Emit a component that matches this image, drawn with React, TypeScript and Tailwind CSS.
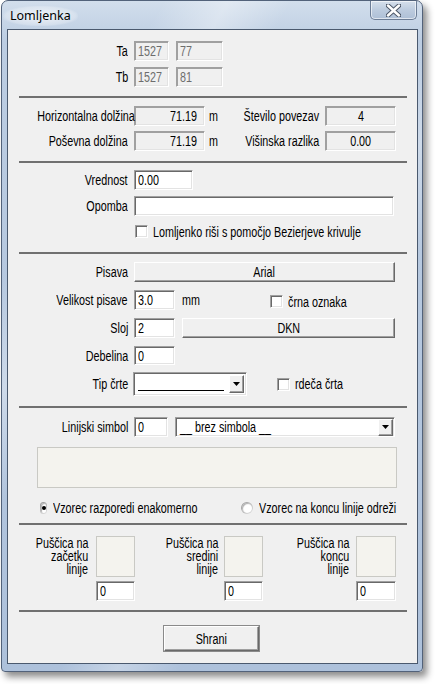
import React from "react";

const sunkenW =
  "bg-white border border-t-[#a0a0a0] border-l-[#a0a0a0] border-b-white border-r-white shadow-[inset_1px_1px_0_#696969,inset_-1px_-1px_0_#e3e3e3]";
const sunkenD =
  "bg-[#f0f0f0] border border-t-[#a0a0a0] border-l-[#a0a0a0] border-b-white border-r-white shadow-[inset_1px_1px_0_#a0a0a0,inset_-1px_-1px_0_#e3e3e3]";
const raised =
  "bg-[#f0f0f0] border border-t-white border-l-white border-b-[#696969] border-r-[#696969] shadow-[inset_-1px_-1px_0_#a0a0a0]";

function T({ children, o = "l" }: { children: React.ReactNode; o?: "l" | "r" | "c" }) {
  const cls = o === "r" ? "origin-right" : o === "c" ? "origin-center" : "origin-left";
  return <span className={`inline-block whitespace-nowrap scale-x-[0.77] ${cls}`}>{children}</span>;
}

function Sep() {
  return <div className="ml-[11px] w-[388px] h-[2px] bg-[#707070]" />;
}

function Label({ children }: { children: React.ReactNode }) {
  return (
    <div className="w-[120px] shrink-0 text-right leading-none">
      <T o="r">{children}</T>
    </div>
  );
}

function Box({
  w,
  h = "h-[20px]",
  disabled,
  align = "left",
  children,
}: {
  w: string;
  h?: string;
  disabled?: boolean;
  align?: "left" | "right" | "center";
  children?: React.ReactNode;
}) {
  const a =
    align === "right"
      ? "justify-end pr-[7px]"
      : align === "center"
      ? "justify-center"
      : "justify-start pl-[3px]";
  const o = align === "right" ? "r" : align === "center" ? "c" : "l";
  return (
    <div
      className={`${w} ${h} shrink-0 flex items-center ${a} leading-none ${
        disabled ? sunkenD : sunkenW
      }`}
    >
      {children !== undefined && <T o={o}>{children}</T>}
    </div>
  );
}

function Check({ label }: { label: string }) {
  return (
    <div className="flex items-center gap-[5px] leading-none">
      <div className={`w-[13px] h-[13px] ${sunkenW}`} />
      <T>{label}</T>
    </div>
  );
}

function Radio({ checked, label }: { checked?: boolean; label: string }) {
  return (
    <div className="flex items-center gap-[6px] leading-none">
      <div className="w-[12px] h-[12px] rounded-full bg-[linear-gradient(135deg,#8f8f8f,#e8e8e8)] p-[1px]">
        <div className="w-full h-full rounded-full bg-white flex items-center justify-center shadow-[inset_1px_1px_1px_#b0b0b0]">
          {checked && <div className="w-[4px] h-[4px] rounded-full bg-black" />}
        </div>
      </div>
      <T>{label}</T>
    </div>
  );
}

function DropBtn({ h = "h-[17px]" }: { h?: string }) {
  return (
    <div className={`w-[15px] ${h} flex items-center justify-center ${raised}`}>
      <svg width="7" height="4" viewBox="0 0 7 4">
        <path d="M0 0 H7 L3.5 4 Z" fill="#000" />
      </svg>
    </div>
  );
}

function ArrowCol({
  lines,
  lw,
  gap,
  bw,
}: {
  lines: string[];
  lw: string;
  gap: string;
  bw: string;
}) {
  return (
    <>
      <div className={`${lw} pt-[1px] text-right leading-[13px]`}>
        {lines.map((l) => (
          <div key={l}>
            <T o="r">{l}</T>
          </div>
        ))}
      </div>
      <div className={`${gap} ${bw} flex flex-col gap-[4px]`}>
        <div className="h-[41px] bg-[#f4f3ee] border border-[#c9c9c4]" />
        <Box w={bw}>0</Box>
      </div>
    </>
  );
}

export default function App() {
  return (
    <div className="w-[436px] h-[684px] bg-white font-['Liberation_Sans','Arial',sans-serif] text-[14px] text-black">
      <div className="relative ml-[1px] w-[422px] h-[672px] rounded-t-[7px] rounded-b-[4px] border border-[#52627a] bg-[linear-gradient(to_bottom,#d2deec,#bccde2_40px,#adc1db)] shadow-[4px_5px_7px_rgba(0,0,0,0.45)] flex flex-col overflow-hidden">
        <div className="pointer-events-none absolute inset-0 bg-[linear-gradient(120deg,transparent_20%,rgba(255,255,255,0.35)_28%,transparent_36%,transparent_55%,rgba(255,255,255,0.3)_62%,transparent_70%)]" />
        {/* title bar */}
        <div className="relative h-[28px] flex items-start justify-between">
          <div className="ml-[1px] mt-[5px] px-[7px] h-[20px] flex items-center rounded-full bg-[radial-gradient(ellipse_at_center,rgba(255,255,255,0.7),rgba(255,255,255,0.25)_65%,transparent_75%)]">
            <span className="font-['Noto_Sans',sans-serif] text-[12.5px] text-black leading-none">Lomljenka</span>
          </div>
          <div className="mr-[5px] w-[47px] h-[19px] rounded-b-[5px] border border-t-0 border-[#6c7d96] bg-[linear-gradient(to_bottom,#d6e0ec,#bccbde_50%,#aebfd6)] shadow-[inset_0_0_0_1px_rgba(255,255,255,0.6)] flex items-center justify-center">
            <svg width="15" height="13" viewBox="0 0 15 13">
              <path
                d="M2 1.5 L13 11.5 M13 1.5 L2 11.5"
                stroke="#4b5566"
                strokeWidth="4.5"
                strokeLinecap="round"
              />
              <path
                d="M2 1.5 L13 11.5 M13 1.5 L2 11.5"
                stroke="#ffffff"
                strokeWidth="2.5"
                strokeLinecap="round"
              />
            </svg>
          </div>
        </div>
        {/* client */}
        <div className="relative ml-[5px] w-[411px] h-[635px] border border-[#4a596e] bg-[#f0f0f0] flex flex-col">
          {/* Ta / Tb */}
          <div className="mt-[11px] flex items-center">
            <Label>Ta</Label>
            <div className="ml-[6px] flex gap-[7px] text-[#6d6d6d]">
              <Box w="w-[35px]" disabled>1527</Box>
              <Box w="w-[47px]" disabled>77</Box>
            </div>
          </div>
          <div className="mt-[6px] flex items-center">
            <Label>Tb</Label>
            <div className="ml-[6px] flex gap-[7px] text-[#6d6d6d]">
              <Box w="w-[35px]" disabled>1527</Box>
              <Box w="w-[47px]" disabled>81</Box>
            </div>
          </div>
          <div className="mt-[9px]">
            <Sep />
          </div>
          {/* lengths */}
          <div className="mt-[8px] flex items-center">
            <Label>Horizontalna dolžina</Label>
            <div className="ml-[6px]">
              <Box w="w-[71px]" disabled align="right">71.19</Box>
            </div>
            <div className="w-[114px] flex items-center justify-between leading-none">
              <span className="ml-[4px]">
                <T>m</T>
              </span>
              <T o="r">Število povezav</T>
            </div>
            <div className="ml-[6px]">
              <Box w="w-[71px]" disabled align="center">4</Box>
            </div>
          </div>
          <div className="mt-[5px] flex items-center">
            <Label>Poševna dolžina</Label>
            <div className="ml-[6px]">
              <Box w="w-[71px]" disabled align="right">71.19</Box>
            </div>
            <div className="w-[114px] flex items-center justify-between leading-none">
              <span className="ml-[4px]">
                <T>m</T>
              </span>
              <T o="r">Višinska razlika</T>
            </div>
            <div className="ml-[6px]">
              <Box w="w-[71px]" disabled align="center">0.00</Box>
            </div>
          </div>
          <div className="mt-[10px]">
            <Sep />
          </div>
          {/* vrednost */}
          <div className="mt-[7px] flex items-center">
            <Label>Vrednost</Label>
            <div className="ml-[6px]">
              <Box w="w-[59px]">0.00</Box>
            </div>
          </div>
          <div className="mt-[6px] flex items-center">
            <Label>Opomba</Label>
            <div className="ml-[6px]">
              <Box w="w-[260px]" />
            </div>
          </div>
          <div className="mt-[9px] ml-[127px] h-[13px] flex items-center">
            <Check label="Lomljenko riši s pomočjo Bezierjeve krivulje" />
          </div>
          <div className="mt-[14px]">
            <Sep />
          </div>
          {/* pisava */}
          <div className="mt-[8px] flex items-center">
            <Label>Pisava</Label>
            <div className={`ml-[6px] w-[261px] h-[20px] flex items-center justify-center leading-none ${raised}`}>
              <T o="c">Arial</T>
            </div>
          </div>
          <div className="mt-[8px] flex items-center">
            <Label>Velikost pisave</Label>
            <div className="ml-[6px]">
              <Box w="w-[41px]">3.0</Box>
            </div>
            <span className="ml-[7px] w-[88px] leading-none">
              <T>mm</T>
            </span>
            <div className="mt-[3px]">
              <Check label="črna oznaka" />
            </div>
          </div>
          <div className="mt-[8px] flex items-center">
            <Label>Sloj</Label>
            <div className="ml-[6px]">
              <Box w="w-[41px]">2</Box>
            </div>
            <div className={`ml-[7px] w-[213px] h-[20px] flex items-center justify-center leading-none ${raised}`}>
              <T o="c">DKN</T>
            </div>
          </div>
          <div className="mt-[8px] flex items-center">
            <Label>Debelina</Label>
            <div className="ml-[6px]">
              <Box w="w-[41px]" h="h-[19px]">0</Box>
            </div>
          </div>
          <div className="mt-[7px] flex items-center">
            <Label>Tip črte</Label>
            <div className={`ml-[5px] w-[114px] h-[24px] flex items-center justify-between pl-[4px] pr-[2px] ${sunkenW}`}>
              <div className="mt-[12px] w-[86px] h-[1px] bg-black" />
              <DropBtn h="h-[18px]" />
            </div>
            <div className="ml-[30px]">
              <Check label="rdeča črta" />
            </div>
          </div>
          <div className="mt-[10px]">
            <Sep />
          </div>
          {/* simbol */}
          <div className="mt-[9px] flex items-center">
            <Label>Linijski simbol</Label>
            <div className="ml-[6px]">
              <Box w="w-[34px]">0</Box>
            </div>
            <div className={`ml-[7px] w-[220px] h-[20px] flex items-center justify-between pl-[4px] pr-[1px] leading-none ${sunkenW}`}>
              <T>__ brez simbola __</T>
              <DropBtn />
            </div>
          </div>
          <div className="mt-[10px] ml-[29px] w-[360px] h-[41px] bg-[#f4f3ee] border border-[#c9c9c4]" />
          <div className="mt-[13px] h-[14px] flex items-center">
            <div className="ml-[32px] w-[201px]">
              <Radio checked label="Vzorec razporedi enakomerno" />
            </div>
            <Radio label="Vzorec na koncu linije odreži" />
          </div>
          <div className="mt-[8px]">
            <Sep />
          </div>
          {/* puščice */}
          <div className="mt-[11px] flex">
            <ArrowCol lines={["Puščica na", "začetku", "linije"]} lw="w-[80px]" gap="ml-[8px]" bw="w-[39px]" />
            <ArrowCol lines={["Puščica na", "sredini", "linije"]} lw="w-[83px]" gap="ml-[6px]" bw="w-[39px]" />
            <ArrowCol lines={["Puščica na", "koncu", "linije"]} lw="w-[86px]" gap="ml-[7px]" bw="w-[40px]" />
          </div>
          <div className="mt-[9px]">
            <Sep />
          </div>
          <div className={`mt-[14px] ml-[156px] w-[95px] h-[25px] flex items-center justify-center leading-none ${raised} outline outline-1 outline-[#8a8a8a]`}>
            <T o="c">Shrani</T>
          </div>
        </div>
      </div>
    </div>
  );
}
